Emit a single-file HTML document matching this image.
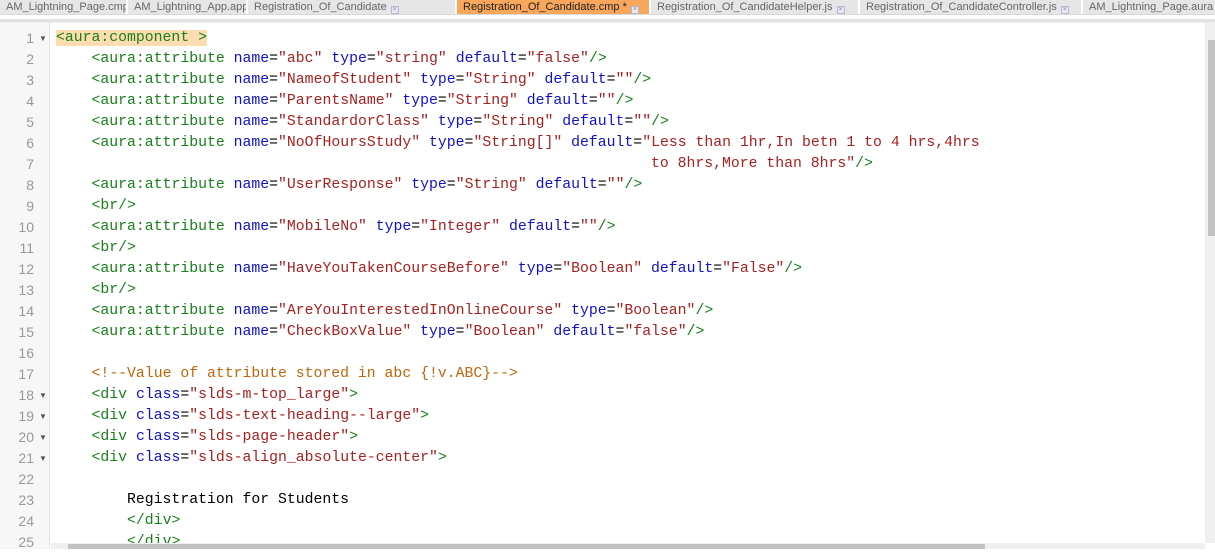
<!DOCTYPE html>
<html><head><meta charset="utf-8"><style>
*{margin:0;padding:0;box-sizing:border-box}
body{width:1215px;height:549px;overflow:hidden;background:#fff;position:relative;font-family:"Liberation Sans",sans-serif}
.tabs{position:absolute;left:0;top:0;width:1215px;height:15px;background:#f0f0f0;border-bottom:1px solid #d8d8d8}
.tab{position:absolute;top:0;height:14px;background:#e6e6e6;border-right:2px solid #fff;color:#666;font-size:11px;line-height:14px;padding-left:6px;white-space:nowrap;overflow:hidden}
.tab.act{background:#f9a75c;color:#222}
.x{display:inline-block;width:8px;height:8px;border:1px solid #b8b8d0;background:#e8e8f4;margin-left:4px;vertical-align:-1px;font-size:7px;line-height:6px;text-align:center;color:#889}
.sep{position:absolute;left:0;top:19px;width:1215px;height:4px;background:#e2e2e2;border-bottom:1px solid #eee}
.gut{position:absolute;left:0;top:23px;width:50px;height:526px;background:#f7f7f7;border-right:1px solid #e4e4e4}
.ln{position:absolute;left:0;width:34px;text-align:right;font-family:"Liberation Sans",sans-serif;font-size:14px;color:#999;height:21px;line-height:21px}
.ar{position:absolute;left:39px;font-size:8px;color:#555;line-height:21px;height:21px}
.code{position:absolute;left:56px;font-family:"Liberation Mono",monospace;font-size:14.8px;line-height:21px;height:21px;white-space:pre;color:#000}
.t{color:#17801a}.a{color:#1010d0}.s{color:#a82020}.c{color:#c0650a}
.hl{background:#fddcb0}
.vs{position:absolute;left:1205px;top:23px;width:10px;height:520px;background:#f0f0f0}
.vt{position:absolute;left:1208px;top:40px;width:7px;height:196px;background:#c2c2c2}
.hs{position:absolute;left:51px;top:543px;width:1154px;height:6px;background:#f0f0f0}
.ht{position:absolute;left:68px;top:544px;width:917px;height:5px;background:#c2c2c2}
</style></head><body>
<div class="tabs">
<div class="tab" style="left:0;width:128px">AM_Lightning_Page.cmp<span class="x">×</span></div>
<div class="tab" style="left:128px;width:120px">AM_Lightning_App.app<span class="x">×</span></div>
<div class="tab" style="left:248px;width:209px">Registration_Of_Candidate<span class="x">×</span></div>
<div class="tab act" style="left:457px;width:194px">Registration_Of_Candidate.cmp *<span class="x">×</span></div>
<div class="tab" style="left:651px;width:209px">Registration_Of_CandidateHelper.js<span class="x">×</span></div>
<div class="tab" style="left:860px;width:223px">Registration_Of_CandidateController.js<span class="x">×</span></div>
<div class="tab" style="left:1083px;width:140px">AM_Lightning_Page.aura</div>
</div>
<div class="sep"></div>
<div class="gut"></div>
<div class="code" style="top:28px"><span class="t hl">&lt;aura:component &gt;</span></div>
<div class="code" style="top:49px">    <span class="t">&lt;aura:attribute</span> <span class="a">name</span>=<span class="s">"abc"</span> <span class="a">type</span>=<span class="s">"string"</span> <span class="a">default</span>=<span class="s">"false"</span><span class="t">/&gt;</span></div>
<div class="code" style="top:70px">    <span class="t">&lt;aura:attribute</span> <span class="a">name</span>=<span class="s">"NameofStudent"</span> <span class="a">type</span>=<span class="s">"String"</span> <span class="a">default</span>=<span class="s">""</span><span class="t">/&gt;</span></div>
<div class="code" style="top:91px">    <span class="t">&lt;aura:attribute</span> <span class="a">name</span>=<span class="s">"ParentsName"</span> <span class="a">type</span>=<span class="s">"String"</span> <span class="a">default</span>=<span class="s">""</span><span class="t">/&gt;</span></div>
<div class="code" style="top:112px">    <span class="t">&lt;aura:attribute</span> <span class="a">name</span>=<span class="s">"StandardorClass"</span> <span class="a">type</span>=<span class="s">"String"</span> <span class="a">default</span>=<span class="s">""</span><span class="t">/&gt;</span></div>
<div class="code" style="top:133px">    <span class="t">&lt;aura:attribute</span> <span class="a">name</span>=<span class="s">"NoOfHoursStudy"</span> <span class="a">type</span>=<span class="s">"String[]"</span> <span class="a">default</span>=<span class="s">"Less than 1hr,In betn 1 to 4 hrs,4hrs</span></div>
<div class="code" style="top:154px">                                                                   <span class="s">to 8hrs,More than 8hrs"</span><span class="t">/&gt;</span></div>
<div class="code" style="top:175px">    <span class="t">&lt;aura:attribute</span> <span class="a">name</span>=<span class="s">"UserResponse"</span> <span class="a">type</span>=<span class="s">"String"</span> <span class="a">default</span>=<span class="s">""</span><span class="t">/&gt;</span></div>
<div class="code" style="top:196px">    <span class="t">&lt;br/&gt;</span></div>
<div class="code" style="top:217px">    <span class="t">&lt;aura:attribute</span> <span class="a">name</span>=<span class="s">"MobileNo"</span> <span class="a">type</span>=<span class="s">"Integer"</span> <span class="a">default</span>=<span class="s">""</span><span class="t">/&gt;</span></div>
<div class="code" style="top:238px">    <span class="t">&lt;br/&gt;</span></div>
<div class="code" style="top:259px">    <span class="t">&lt;aura:attribute</span> <span class="a">name</span>=<span class="s">"HaveYouTakenCourseBefore"</span> <span class="a">type</span>=<span class="s">"Boolean"</span> <span class="a">default</span>=<span class="s">"False"</span><span class="t">/&gt;</span></div>
<div class="code" style="top:280px">    <span class="t">&lt;br/&gt;</span></div>
<div class="code" style="top:301px">    <span class="t">&lt;aura:attribute</span> <span class="a">name</span>=<span class="s">"AreYouInterestedInOnlineCourse"</span> <span class="a">type</span>=<span class="s">"Boolean"</span><span class="t">/&gt;</span></div>
<div class="code" style="top:322px">    <span class="t">&lt;aura:attribute</span> <span class="a">name</span>=<span class="s">"CheckBoxValue"</span> <span class="a">type</span>=<span class="s">"Boolean"</span> <span class="a">default</span>=<span class="s">"false"</span><span class="t">/&gt;</span></div>
<div class="code" style="top:364px">    <span class="c">&lt;!--Value of attribute stored in abc {!v.ABC}--&gt;</span></div>
<div class="code" style="top:385px">    <span class="t">&lt;div</span> <span class="a">class</span>=<span class="s">"slds-m-top_large"</span><span class="t">&gt;</span></div>
<div class="code" style="top:406px">    <span class="t">&lt;div</span> <span class="a">class</span>=<span class="s">"slds-text-heading--large"</span><span class="t">&gt;</span></div>
<div class="code" style="top:427px">    <span class="t">&lt;div</span> <span class="a">class</span>=<span class="s">"slds-page-header"</span><span class="t">&gt;</span></div>
<div class="code" style="top:448px">    <span class="t">&lt;div</span> <span class="a">class</span>=<span class="s">"slds-align_absolute-center"</span><span class="t">&gt;</span></div>
<div class="code" style="top:490px">        Registration for Students</div>
<div class="code" style="top:511px">        <span class="t">&lt;/div&gt;</span></div>
<div class="code" style="top:532px">        <span class="t">&lt;/div&gt;</span></div>
<div class="ln" style="top:28px">1</div><div class="ar" style="top:28px">▼</div>
<div class="ln" style="top:49px">2</div><div class="ln" style="top:70px">3</div><div class="ln" style="top:91px">4</div>
<div class="ln" style="top:112px">5</div><div class="ln" style="top:133px">6</div><div class="ln" style="top:154px">7</div>
<div class="ln" style="top:175px">8</div><div class="ln" style="top:196px">9</div><div class="ln" style="top:217px">10</div>
<div class="ln" style="top:238px">11</div><div class="ln" style="top:259px">12</div><div class="ln" style="top:280px">13</div>
<div class="ln" style="top:301px">14</div><div class="ln" style="top:322px">15</div><div class="ln" style="top:343px">16</div>
<div class="ln" style="top:364px">17</div>
<div class="ln" style="top:385px">18</div><div class="ar" style="top:385px">▼</div>
<div class="ln" style="top:406px">19</div><div class="ar" style="top:406px">▼</div>
<div class="ln" style="top:427px">20</div><div class="ar" style="top:427px">▼</div>
<div class="ln" style="top:448px">21</div><div class="ar" style="top:448px">▼</div>
<div class="ln" style="top:469px">22</div><div class="ln" style="top:490px">23</div><div class="ln" style="top:511px">24</div>
<div class="ln" style="top:532px">25</div>
<div class="vs"></div><div class="vt"></div>
<div class="hs"></div><div class="ht"></div>
</body></html>
